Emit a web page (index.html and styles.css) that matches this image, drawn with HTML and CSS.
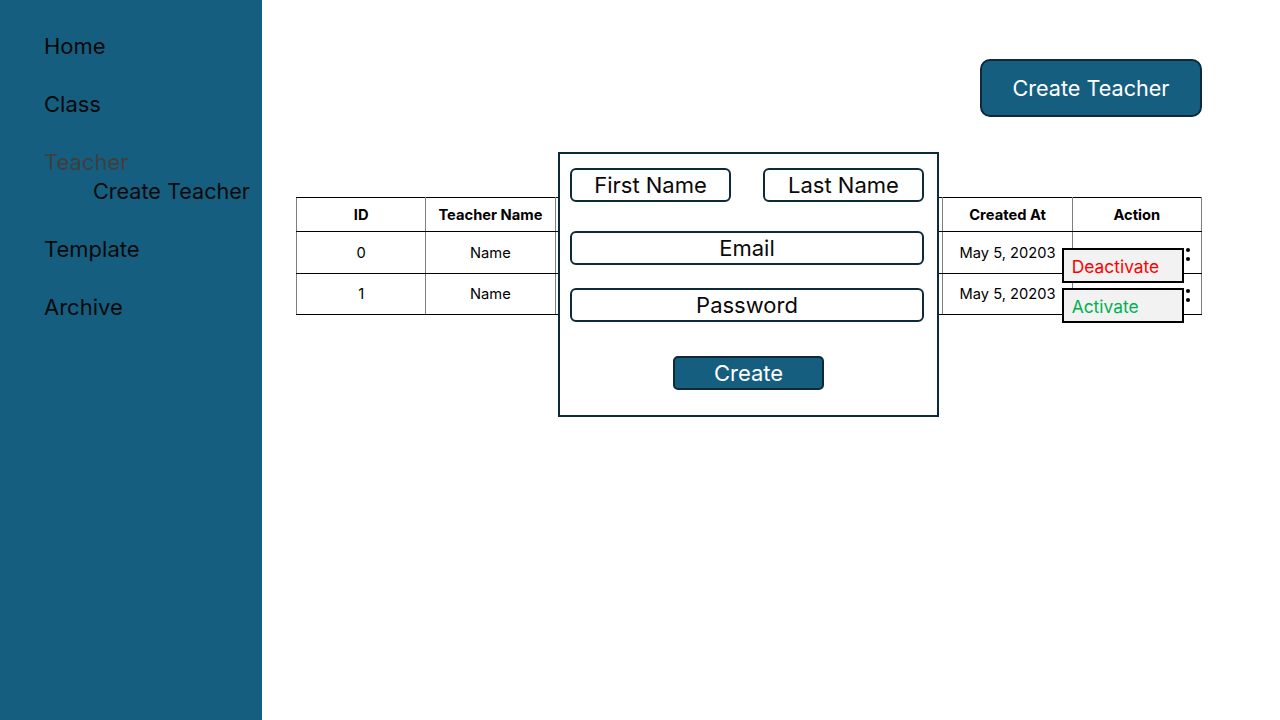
FILE: index.html
```html
<!DOCTYPE html>
<html>
<head>
<meta charset="utf-8">
<link rel="stylesheet" href="styles.css">
</head>
<body>
<div class="app">
  <nav class="sidebar">
    <a class="nav-item">Home</a>
    <a class="nav-item">Class</a>
    <div class="nav-group">
      <a class="nav-item muted">Teacher</a>
      <a class="nav-sub">Create Teacher</a>
    </div>
    <a class="nav-item">Template</a>
    <a class="nav-item">Archive</a>
  </nav>
  <main class="main">
    <div class="toolbar">
      <button class="primary-btn">Create Teacher</button>
    </div>
    <table class="grid">
      <thead>
        <tr>
          <th>ID</th><th>Teacher Name</th><th></th><th></th><th></th><th>Created At</th><th>Action</th>
        </tr>
      </thead>
      <tbody>
        <tr class="row-a">
          <td>0</td><td>Name</td><td></td><td></td><td></td><td>May 5, 20203</td>
          <td class="action"><span class="kebab"><i></i><i></i></span><div class="menu deactivate">Deactivate</div></td>
        </tr>
        <tr class="row-b">
          <td>1</td><td>Name</td><td></td><td></td><td></td><td>May 5, 20203</td>
          <td class="action"><span class="kebab"><i></i><i></i></span><div class="menu activate">Activate</div></td>
        </tr>
      </tbody>
    </table>
    <div class="modal">
      <div class="modal-row split">
        <div class="field">First Name</div>
        <div class="field">Last Name</div>
      </div>
      <div class="field wide">Email</div>
      <div class="field wide">Password</div>
      <button class="create-btn">Create</button>
    </div>
  </main>
</div>
</body>
</html>
```
FILE: styles.css
```css
* { box-sizing: border-box; }
html, body { margin: 0; padding: 0; }
body {
  font-family: Inter, "Liberation Sans", Arial, sans-serif;
  background: #ffffff;
  color: #000;
}
.app {
  display: flex;
  width: 1280px;
  height: 720px;
  overflow: hidden;
}
.sidebar {
  width: 262px;
  flex: none;
  background: #165e80;
  display: flex;
  flex-direction: column;
  padding: 33px 0 0 44px;
  gap: 31px;
}
.nav-item {
  display: block;
  font-size: 22px;
  line-height: 27px;
  color: #0a0a0a;
}
.nav-item.muted { color: #3f3f3f; }
.nav-group { display: flex; flex-direction: column; }
.nav-sub {
  display: block;
  font-size: 21.6px;
  line-height: 27px;
  padding-left: 49px;
  margin-top: 2px;
  color: #0a0a0a;
}
.main {
  position: relative;
  flex: 1;
  padding: 59px 79px 0 34px;
  display: flex;
  flex-direction: column;
}
.toolbar { display: flex; justify-content: flex-end; }
.primary-btn {
  width: 222px;
  height: 58px;
  background: #165e80;
  border: 2px solid #0c2a39;
  border-radius: 10px;
  color: #fff;
  font-family: inherit;
  font-size: 21.6px;
}
.grid {
  margin-top: 80px;
  width: 906px;
  border-collapse: collapse;
  table-layout: fixed;
  font-size: 14.7px;
}
.grid th, .grid td {
  border-top: 1px solid #000;
  border-bottom: 1px solid #000;
  border-left: 1px solid #7f7f7f;
  border-right: 1px solid #7f7f7f;
  text-align: center;
  padding: 0;
}
.grid th { height: 34px; font-weight: 700; }
.grid .row-a td { height: 42px; }
.grid .row-b td { height: 41px; }
.grid td.action { position: relative; }
.kebab {
  position: absolute;
  right: 11px;
  top: 16px;
  display: flex;
  flex-direction: column;
  gap: 5px;
}
.row-b .kebab { top: 15px; }
.kebab i {
  display: block;
  width: 4px;
  height: 4px;
  border-radius: 50%;
  background: #000;
}
.menu {
  position: absolute;
  left: -11px;
  width: 122px;
  height: 35px;
  background: #f2f2f2;
  border: 2px solid #000;
  text-align: left;
  font-size: 17.4px;
  padding: 5px 0 0 8px;
  line-height: 24px;
}
.menu.deactivate { top: 16px; color: #ff0000; }
.menu.activate { top: 14px; color: #00b050; }
.modal {
  position: absolute;
  left: 296px;
  top: 152px;
  width: 381px;
  height: 265px;
  background: #fff;
  border: 2px solid #0c2a39;
  padding: 14px 13px 0 10px;
  display: flex;
  flex-direction: column;
}
.modal-row.split {
  display: flex;
  justify-content: space-between;
}
.field {
  height: 34px;
  border: 2px solid #0c2a39;
  border-radius: 6px;
  font-size: 22px;
  line-height: 30px;
  text-align: center;
  color: #0a0a0a;
}
.split .field { width: 161px; }
.field.wide { width: 354px; margin-top: 29px; }
.field.wide + .field.wide { margin-top: 23px; }
.create-btn {
  align-self: flex-start;
  margin: 34px 0 0 103px;
  width: 151px;
  height: 34px;
  background: #165e80;
  border: 2px solid #0c2a39;
  border-radius: 5px;
  color: #fff;
  font-family: inherit;
  font-size: 22px;
  line-height: 28px;
  padding: 0;
}
```
